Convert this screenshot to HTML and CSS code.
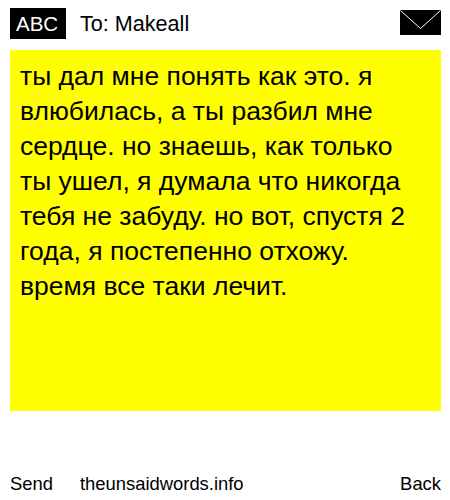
FILE: index.html
```html
<!DOCTYPE html>
<html>
<head>
<meta charset="utf-8">
<title>The Unsaid Words</title>
<link rel="stylesheet" href="styles.css">
</head>
<body>
<div class="page">
  <header class="top">
    <span class="abc">ABC</span>
    <span class="to">To: Makeall</span>
    <svg class="env" width="41" height="25" viewBox="0 0 41 25"><rect width="41" height="25" fill="#000"/><path d="M0.5 0.5 L20.5 18.5 L40.5 0.5" fill="none" stroke="#fff" stroke-width="1"/></svg>
  </header>
  <main class="note">ты дал мне понять как это. я<br>влюбилась, а ты разбил мне<br>сердце. но знаешь, как только<br>ты ушел, я думала что никогда<br>тебя не забуду. но вот, спустя 2<br>года, я постепенно отхожу.<br>время все таки лечит.</main>
  <footer class="bottom">
    <span class="send">Send</span>
    <span class="site">theunsaidwords.info</span>
    <span class="back">Back</span>
  </footer>
</div>
</body>
</html>
```
FILE: styles.css
```css
html, body { margin: 0; padding: 0; background: #fff; }
body { width: 450px; height: 500px; overflow: hidden; font-family: "Liberation Sans", Arial, sans-serif; color: #000; }
.page { display: flex; flex-direction: column; height: 500px; padding: 8px 9px 0 10px; box-sizing: border-box; }
.top { display: flex; align-items: flex-start; height: 31px; font-size: 21.6px; line-height: 31px; }
.abc { background: #000; color: #fff; width: 56px; height: 31px; padding-left: 6px; box-sizing: border-box; font-size: 20.5px; }
.to { margin-left: 14px; flex: 1; }
.env { display: block; margin-top: 2px; }
.note { margin-top: 11px; height: 361px; background: #ff0; padding: 9px 10px; box-sizing: border-box; font-size: 26.5px; line-height: 35px; white-space: nowrap; }
.bottom { display: flex; margin-top: 62px; font-size: 18.4px; line-height: 22px; }
.send { width: 70px; }
.site { flex: 1; }
```
